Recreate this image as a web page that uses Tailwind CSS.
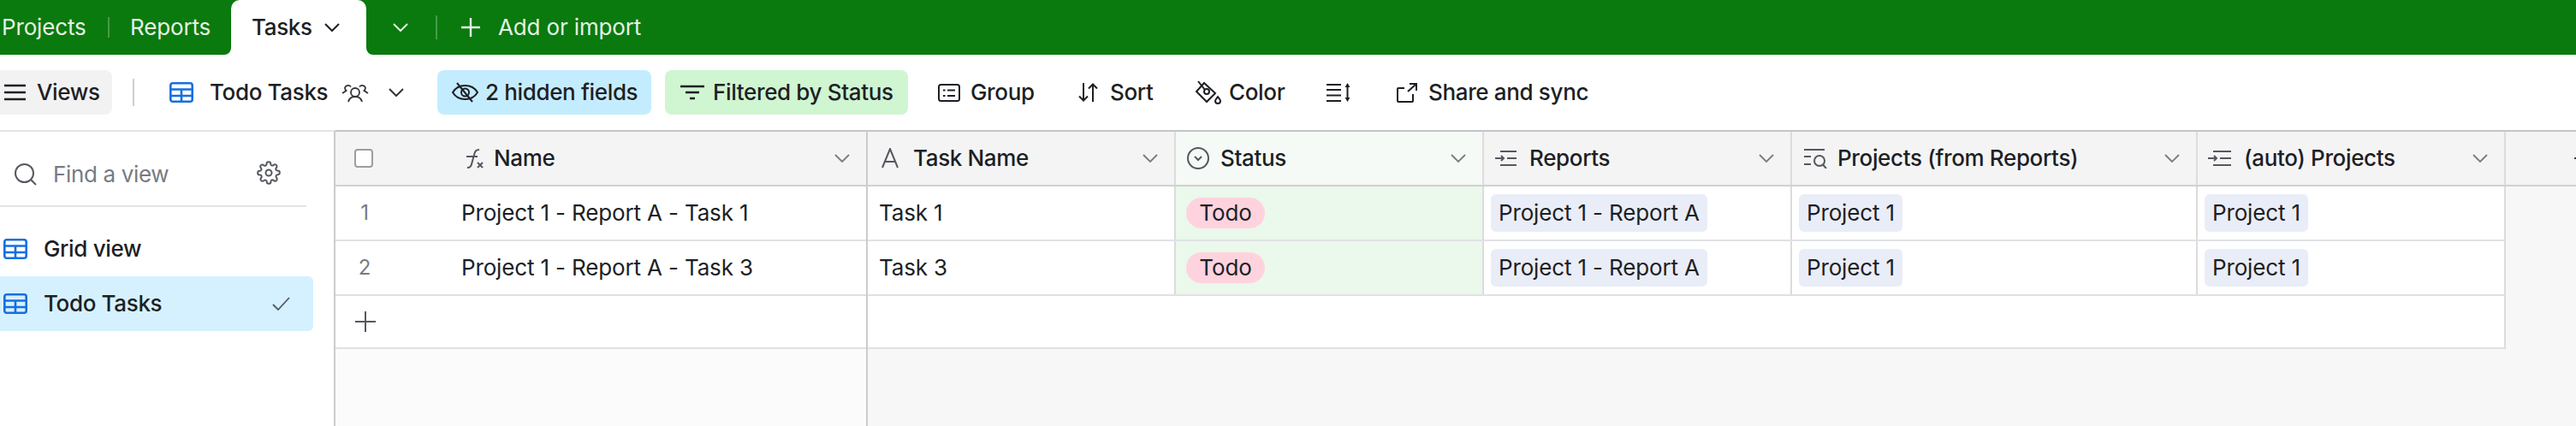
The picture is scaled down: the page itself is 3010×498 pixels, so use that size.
<!DOCTYPE html>
<html lang="en">
<head>
<meta charset="UTF-8">
<title>Tasks</title>
<script src="https://cdn.jsdelivr.net/npm/@tailwindcss/browser@4"></script>
</head>
<body class="bg-white font-['Inter',sans-serif] text-[26px] leading-[32px] tracking-[-0.15px] text-[#1d1f25] overflow-hidden">

<!-- tab bar -->
<header class="h-[64px] bg-[#0a7a0e] flex items-center text-[#e6f0e6]">
  <span class="ml-[2px] w-[124px]">Projects</span>
  <span class="w-[2px] h-[24px] bg-white/25"></span>
  <span class="ml-[24px] w-[118px]">Reports</span>
  <div class="relative h-[64px] w-[158px] bg-white rounded-t-[10px] flex items-center pl-[24px] text-[#1d1f25] font-medium tracking-[-0.35px]">
    <span class="absolute bottom-0 -left-[8px] w-[8px] h-[8px] bg-white"><span class="block w-[8px] h-[8px] bg-[#0a7a0e] rounded-br-[8px]"></span></span>
    <span class="absolute bottom-0 -right-[8px] w-[8px] h-[8px] bg-white"><span class="block w-[8px] h-[8px] bg-[#0a7a0e] rounded-bl-[8px]"></span></span>
    <span class="w-[85px]">Tasks</span>
    <svg class="w-[18px] h-[10px]" viewBox="0 0 18 10" fill="none" stroke="currentColor" stroke-width="2"><path d="M1 1l8 8 8-8"/></svg>
  </div>
  <svg class="ml-[31px] w-[18px] h-[10px]" viewBox="0 0 18 10" fill="none" stroke="currentColor" stroke-width="2"><path d="M1 1l8 8 8-8"/></svg>
  <span class="ml-[32px] w-[2px] h-[28px] bg-white/25"></span>
  <svg class="ml-[28px] w-[22px] h-[22px]" viewBox="0 0 22 22" stroke="currentColor" stroke-width="2.4"><path d="M11 0v22M0 11h22"/></svg>
  <span class="ml-[21px]">Add or import</span>
</header>

<!-- view toolbar -->
<div class="h-[88px] flex items-center font-medium tracking-[-0.35px]">
  <div class="h-[52px] w-[131px] bg-[#f2f2f2] rounded-r-[8px] flex items-center pl-[5px]">
    <svg class="w-[25px] h-[20px]" viewBox="0 0 25 20" stroke="currentColor" stroke-width="2.4"><path d="M0 2h25M0 10h25M0 18h25"/></svg>
    <span class="ml-[13px]">Views</span>
  </div>
  <span class="ml-[24px] w-[2px] h-[32px] bg-[#cfcfcf]"></span>
  <svg class="ml-[41px] w-[28px] h-[24px]" viewBox="0 0 28 24" fill="none" stroke="#166ee1" stroke-width="2.6"><rect x="1.3" y="1.3" width="25.4" height="21.4" rx="2.5"/><path d="M1.3 8.500h25.400M1.300 16h25.400M14 8.500v14"/></svg>
  <span class="ml-[19px] w-[154px]">Todo Tasks</span>
  <svg class="w-[32px] h-[24px]" viewBox="0 0 32 24" fill="none" stroke="#33353b" stroke-width="1.8"><circle cx="16" cy="12" r="5"/><path d="M8 23c1-4 4-6 8-6s7 2 8 6"/><path d="M11 5.500a4 4 0 0 0-7 1c0 1.500.5 2.500 1.500 3.500L1 13"/><path d="M21 5.500a4 4 0 0 1 7 1c0 1.500-.5 2.500-1.500 3.500L31 13"/></svg>
  <svg class="ml-[23px] w-[18px] h-[10px]" viewBox="0 0 18 10" fill="none" stroke="#33353b" stroke-width="2"><path d="M1 1l8 8 8-8"/></svg>
  <div class="ml-[39px] h-[52px] w-[250px] bg-[#c4ecff] rounded-[8px] flex items-center pl-[17px]">
    <svg class="w-[31px] h-[24px]" viewBox="0 0 31 24" fill="none" stroke="#1d1f25" stroke-width="2"><path d="M1 12c3-5 8-8 14.500-8S27 7 30 12c-3 5-8 8-14.500 8S4 17 1 12z"/><circle cx="15.500" cy="12" r="4.500"/><path d="M6 1l18 22"/></svg>
    <span class="ml-[8px]">2 hidden fields</span>
  </div>
  <div class="ml-[16px] h-[52px] w-[284px] bg-[#cff5d1] rounded-[8px] flex items-center pl-[18px]">
    <svg class="w-[28px] h-[18px]" viewBox="0 0 28 18" stroke="#1d1f25" stroke-width="2.4"><path d="M0 2h28M6 9h16M11 16h6"/></svg>
    <span class="ml-[10px]">Filtered by Status</span>
  </div>
  <svg class="ml-[35px] w-[26px] h-[21px]" viewBox="0 0 26 21" fill="none" stroke="#1d1f25" stroke-width="2"><rect x="1" y="1" width="24" height="19" rx="2.500"/><path d="M6 7.500h2.500M11 7.500h9M6 14h2.500M11 14h9"/></svg>
  <span class="ml-[12px] w-[73px]">Group</span>
  <svg class="ml-[53px] w-[23px] h-[22px]" viewBox="0 0 23 22" fill="none" stroke="#1d1f25" stroke-width="2"><path d="M6 0v20M1 15.500l5 5 5-5M17 22V2M12 6.500l5-5 5 5"/></svg>
  <span class="ml-[14px] w-[50px]">Sort</span>
  <svg class="ml-[49px] w-[32px] h-[28px]" viewBox="0 0 32 28" fill="none" stroke="#1d1f25" stroke-width="2"><path d="M11 3L2 13l12 12 10-10z"/><circle cx="14" cy="13" r="3"/><path d="M4 1l8 10"/><path d="M27 19c2 2.500 3 3.700 3 5a3 3 0 0 1-6 0c0-1.300 1-2.500 3-5z"/></svg>
  <span class="ml-[8px] w-[63px]">Color</span>
  <svg class="ml-[51px] w-[29px] h-[22px]" viewBox="0 0 29 22" fill="none" stroke="#1d1f25" stroke-width="2.2"><path d="M0 2h17M0 8h17M0 14.500h17M0 21h17"/><path d="M24.500 3v16" stroke-width="2"/><path d="M21.500 5l3-5 3 5zM21.500 17l3 5 3-5z" fill="#1d1f25" stroke="none"/></svg>
  <svg class="ml-[53px] w-[24px] h-[23px]" viewBox="0 0 24 23" fill="none" stroke="#1d1f25" stroke-width="2"><path d="M9 6H2a1 1 0 0 0-1 1v14a1 1 0 0 0 1 1h16a1 1 0 0 0 1-1v-8M13 10L23 1M15 1h8v8"/></svg>
  <span class="ml-[13px]">Share and sync</span>
</div>

<div class="h-[346px] flex">
  <!-- views sidebar -->
  <aside class="w-[392px] border-t-2 border-t-[#e5e5e5] border-r-2 border-r-[#cccccc] shrink-0">
    <div class="h-[88px] w-[358px] border-b-2 border-[#e5e5e5] flex items-center pl-[17px] pt-[14px] text-[#777b82] tracking-[-0.35px]">
      <svg class="w-[26px] h-[26px]" viewBox="0 0 26 26" fill="none" stroke="#555860" stroke-width="2"><circle cx="11.500" cy="11.500" r="10.500"/><path d="M19 19l6 6"/></svg>
      <span class="ml-[19px] w-[238px]">Find a view</span>
      <svg class="-mt-[4px] w-[28px] h-[28px] shrink-0" viewBox="0 0 24 24" fill="none" stroke="#555860" stroke-width="1.700"><circle cx="12" cy="12" r="3"/><path d="M19.400 15a1.650 1.650 0 0 0 .33 1.820l.06.06a2 2 0 1 1-2.830 2.830l-.06-.06a1.650 1.650 0 0 0-2.800 1.170V21a2 2 0 1 1-4 0v-.09a1.650 1.650 0 0 0-2.800-1.170l-.06.06a2 2 0 1 1-2.830-2.830l.06-.06a1.650 1.650 0 0 0-1.170-2.800H3a2 2 0 1 1 0-4h.09a1.650 1.650 0 0 0 1.170-2.800l-.06-.06a2 2 0 1 1 2.830-2.830l.06.06a1.650 1.650 0 0 0 2.800-1.170V3a2 2 0 1 1 4 0v.09a1.650 1.650 0 0 0 2.800 1.170l.06-.06a2 2 0 1 1 2.830 2.830l-.06.06a1.650 1.650 0 0 0 1.170 2.800H21a2 2 0 1 1 0 4h-.09a1.650 1.650 0 0 0-1.510 1z"/></svg>
    </div>
    <div class="mt-[17px] h-[64px] w-[366px] flex items-center pl-[4px] font-medium tracking-[-0.35px]">
      <svg class="w-[28px] h-[24px]" viewBox="0 0 28 24" fill="none" stroke="#166ee1" stroke-width="2.6"><rect x="1.3" y="1.3" width="25.4" height="21.4" rx="2.5"/><path d="M1.3 8.500h25.400M1.300 16h25.400M14 8.500v14"/></svg>
      <span class="ml-[19px]">Grid view</span>
    </div>
    <div class="h-[64px] w-[366px] bg-[#d5f1ff] rounded-r-[6px] flex items-center pl-[4px] font-medium tracking-[-0.35px]">
      <svg class="w-[28px] h-[24px]" viewBox="0 0 28 24" fill="none" stroke="#166ee1" stroke-width="2.6"><rect x="1.3" y="1.3" width="25.4" height="21.4" rx="2.5"/><path d="M1.3 8.500h25.400M1.300 16h25.400M14 8.500v14"/></svg>
      <span class="ml-[19px] w-[267px]">Todo Tasks</span>
      <svg class="w-[21px] h-[16px]" viewBox="0 0 21 16" fill="none" stroke="#555860" stroke-width="1.800"><path d="M1 9l6 6L20 1"/></svg>
    </div>
  </aside>

  <!-- frozen column -->
  <div class="w-[622px] shrink-0 border-r-2 border-[#cccccc] bg-[#fbfbfb]">
    <div class="h-[66px] border-t-2 border-[#c4c4c8] border-b-2 border-b-[#d0d0d0] bg-[#f4f4f4] flex items-center pr-[19px] font-medium tracking-[-0.35px]">
      <span class="ml-[22px] w-[22px] h-[22px] rounded-[4px] border-2 border-[#9a9da3] bg-white"></span>
      <svg class="ml-[105px] w-[24px] h-[24px]" viewBox="0 0 24 24" fill="none" stroke="#555860" stroke-width="2"><path d="M19 2c-4 0-5 2-6 6l-3 11c-.5 2.500-2 4-5 4M4 10h13M17 17l6 6M23 17l-6 6"/></svg>
      <span class="ml-[12px]">Name</span>
      <svg class="ml-auto w-[18px] h-[10px]" viewBox="0 0 18 10" fill="none" stroke="#777b82" stroke-width="1.800"><path d="M1 1l8 8 8-8"/></svg>
    </div>
    <div class="h-[64px] bg-white border-b-2 border-[#dfe2e5] flex items-center">
      <span class="w-[68px] text-center text-[#777b82] text-[24px]">1</span>
      <span class="ml-[79px]">Project 1 - Report A - Task 1</span>
    </div>
    <div class="h-[64px] bg-white border-b-2 border-[#dfe2e5] flex items-center">
      <span class="w-[68px] text-center text-[#777b82] text-[24px]">2</span>
      <span class="ml-[79px]">Project 1 - Report A - Task 3</span>
    </div>
    <div class="h-[62px] bg-white border-b-2 border-[#dfe2e5] flex items-center">
      <svg class="ml-[23px] w-[24px] h-[24px]" viewBox="0 0 24 24" stroke="#555860" stroke-width="2"><path d="M12 0v24M0 12h24"/></svg>
    </div>
  </div>

  <!-- scrolling columns -->
  <div class="grow bg-[#f7f7f7]">
    <div class="h-[66px] border-t-2 border-[#c4c4c8] border-b-2 border-b-[#d0d0d0] bg-[#f4f4f4] flex font-medium tracking-[-0.35px]">
      <div class="w-[360px] border-r-2 border-[#dcdcdc] flex items-center pl-[16px] pr-[19px]">
        <svg class="w-[20px] h-[24px]" viewBox="0 0 20 24" fill="none" stroke="#555860" stroke-width="2"><path d="M1 23L10 1l9 22M4 16h12"/></svg>
        <span class="ml-[17px]">Task Name</span>
        <svg class="ml-auto w-[18px] h-[10px]" viewBox="0 0 18 10" fill="none" stroke="#777b82" stroke-width="1.800"><path d="M1 1l8 8 8-8"/></svg>
      </div>
      <div class="w-[360px] bg-[#f5faf6] border-r-2 border-[#dcdcdc] flex items-center pl-[13px] pr-[19px]">
        <svg class="w-[26px] h-[26px]" viewBox="0 0 26 26" fill="none" stroke="#555860" stroke-width="2"><circle cx="13" cy="13" r="12"/><path d="M9 11l4 4 4-4"/></svg>
        <span class="ml-[13px]">Status</span>
        <svg class="ml-auto w-[18px] h-[10px]" viewBox="0 0 18 10" fill="none" stroke="#777b82" stroke-width="1.800"><path d="M1 1l8 8 8-8"/></svg>
      </div>
      <div class="w-[360px] border-r-2 border-[#dcdcdc] flex items-center pl-[13px] pr-[19px]">
        <svg class="w-[25px] h-[20px]" viewBox="0 0 25 20" fill="none" stroke="#555860" stroke-width="2"><path d="M6 2h19M14 10h11M6 18h19M0 10h10M7 7l3 3-3 3"/></svg>
        <span class="ml-[15px]">Reports</span>
        <svg class="ml-auto w-[18px] h-[10px]" viewBox="0 0 18 10" fill="none" stroke="#777b82" stroke-width="1.800"><path d="M1 1l8 8 8-8"/></svg>
      </div>
      <div class="w-[474px] border-r-2 border-[#dcdcdc] flex items-center pl-[14px] pr-[19px]">
        <svg class="w-[27px] h-[24px]" viewBox="0 0 27 24" fill="none" stroke="#555860" stroke-width="2"><path d="M0 2h24M0 10h8M0 19h8"/><circle cx="18" cy="15" r="6"/><path d="M22 19.500l4 4.500"/></svg>
        <span class="ml-[12px]">Projects (from Reports)</span>
        <svg class="ml-auto w-[18px] h-[10px]" viewBox="0 0 18 10" fill="none" stroke="#777b82" stroke-width="1.800"><path d="M1 1l8 8 8-8"/></svg>
      </div>
      <div class="w-[360px] border-r-2 border-[#dcdcdc] flex items-center pl-[12px] pr-[19px]">
        <svg class="w-[27px] h-[20px]" viewBox="0 0 27 20" fill="none" stroke="#555860" stroke-width="2"><path d="M6 2h21M14 10h13M6 18h21M0 10h10M7 7l3 3-3 3"/></svg>
        <span class="ml-[15px]">(auto) Projects</span>
        <svg class="ml-auto w-[18px] h-[10px]" viewBox="0 0 18 10" fill="none" stroke="#777b82" stroke-width="1.800"><path d="M1 1l8 8 8-8"/></svg>
      </div>
      <div class="grow flex items-center pl-[80px]">
        <svg class="w-[16px] h-[16px] shrink-0" viewBox="0 0 16 16" stroke="#33353b" stroke-width="2"><path d="M8 0v16M0 8h16"/></svg>
      </div>
    </div>

    <div class="w-[1914px] bg-white border-r-2 border-[#dcdcdc]">
      <div class="h-[64px] border-b-2 border-[#dfe2e5] flex">
        <div class="w-[360px] border-r-2 border-[#dcdcdc] flex items-center pl-[13px]">Task 1</div>
        <div class="w-[360px] bg-[#ebf8ec] border-r-2 border-[#dcdcdc] flex items-center pl-[12px]"><span class="h-[36px] w-[92px] bg-[#ffd3de] rounded-full text-center leading-[36px]">Todo</span></div>
        <div class="w-[360px] border-r-2 border-[#dcdcdc] flex items-center pl-[8px]"><span class="h-[44px] w-[253px] bg-[#e9edf8] rounded-[6px] pl-[9px] leading-[44px]">Project 1 - Report A</span></div>
        <div class="w-[474px] border-r-2 border-[#dcdcdc] flex items-center pl-[8px]"><span class="h-[44px] w-[121px] bg-[#e9edf8] rounded-[6px] pl-[9px] leading-[44px]">Project 1</span></div>
        <div class="flex items-center pl-[8px]"><span class="h-[44px] w-[121px] bg-[#e9edf8] rounded-[6px] pl-[9px] leading-[44px]">Project 1</span></div>
      </div>
      <div class="h-[64px] border-b-2 border-[#dfe2e5] flex">
        <div class="w-[360px] border-r-2 border-[#dcdcdc] flex items-center pl-[13px]">Task 3</div>
        <div class="w-[360px] bg-[#ebf8ec] border-r-2 border-[#dcdcdc] flex items-center pl-[12px]"><span class="h-[36px] w-[92px] bg-[#ffd3de] rounded-full text-center leading-[36px]">Todo</span></div>
        <div class="w-[360px] border-r-2 border-[#dcdcdc] flex items-center pl-[8px]"><span class="h-[44px] w-[253px] bg-[#e9edf8] rounded-[6px] pl-[9px] leading-[44px]">Project 1 - Report A</span></div>
        <div class="w-[474px] border-r-2 border-[#dcdcdc] flex items-center pl-[8px]"><span class="h-[44px] w-[121px] bg-[#e9edf8] rounded-[6px] pl-[9px] leading-[44px]">Project 1</span></div>
        <div class="flex items-center pl-[8px]"><span class="h-[44px] w-[121px] bg-[#e9edf8] rounded-[6px] pl-[9px] leading-[44px]">Project 1</span></div>
      </div>
      <div class="h-[62px] border-b-2 border-[#dfe2e5]"></div>
    </div>
  </div>
</div>
</body>
</html>
